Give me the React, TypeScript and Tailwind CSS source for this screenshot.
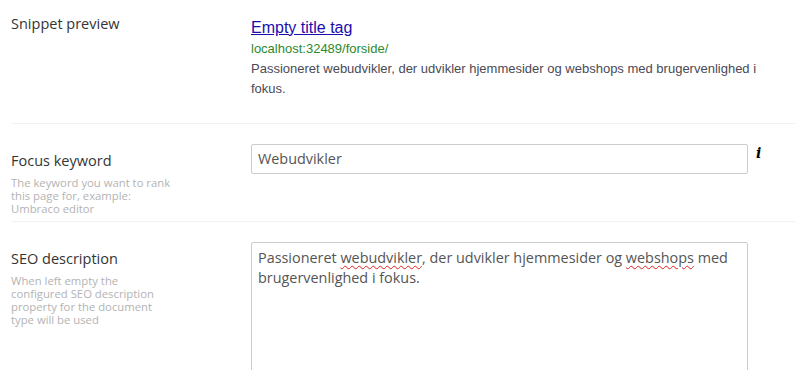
export default function App() {
  const label = "text-[14.5px] leading-[20px] text-[#343434]";
  const desc = "text-[11.3px] leading-[13px] text-[#b3b3b3]";
  const wavy = "underline decoration-wavy decoration-[#e02020] decoration-[1px] underline-offset-[2px]";
  return (
    <div className="w-[795px] h-[370px] overflow-hidden bg-white pl-[11px]" style={{ fontFamily: '"Open Sans", sans-serif' }}>
      {/* Snippet preview */}
      <div className="grid grid-cols-[240px_1fr] border-b border-[#f2f2f2] h-[124px] pt-[14px]">
        <div className={label}>Snippet preview</div>
        <div className="pt-[4px] pr-[10px]" style={{ fontFamily: '"Liberation Sans", Arial, sans-serif' }}>
          <div className="text-[16px] leading-[20px] text-[#1a0dab] underline">Empty title tag</div>
          <div className="text-[13px] leading-[20px] text-[#2c8a2c] mt-[1px]">localhost:32489/forside/</div>
          <div className="text-[13px] leading-[20px] text-[#4a4a55]">
            Passioneret webudvikler, der udvikler hjemmesider og webshops med brugervenlighed i fokus.
          </div>
        </div>
      </div>
      {/* Focus keyword */}
      <div className="grid grid-cols-[240px_1fr] border-b border-[#f2f2f2] h-[98px] pt-[20px]">
        <div className="pt-[7px]">
          <div className={label}>Focus keyword</div>
          <div className={`${desc} mt-[5px] w-[168px]`}>
            The keyword you want to rank this page for, example: Umbraco editor
          </div>
        </div>
        <div className="flex items-start">
          <div className="w-[497px] h-[30px] border border-[#cccccc] rounded-[2px] px-[6px] text-[14.4px] leading-[28px] text-[#555555]">
            Webudvikler
          </div>
          <div
            className="ml-[8px] -mt-[1px] text-[14px] leading-[20px] font-bold italic text-black"
            style={{ fontFamily: '"DejaVu Serif", "Liberation Serif", serif' }}
          >
            i
          </div>
        </div>
      </div>
      {/* SEO description */}
      <div className="grid grid-cols-[240px_1fr] pt-[20px]">
        <div className="pt-[7px]">
          <div className={label}>SEO description</div>
          <div className={`${desc} mt-[5px] w-[150px]`}>
            When left empty the configured SEO description property for the document type will be used
          </div>
        </div>
        <div>
          <div className="w-[497px] h-[160px] border border-[#cccccc] rounded-[2px] px-[6px] py-[5px] text-[14.4px] leading-[20px] text-[#555555]">
            Passioneret <span className={wavy}>webudvikler</span>, der udvikler hjemmesider og{" "}
            <span className={wavy}>webshops</span> med brugervenlighed i fokus.
          </div>
        </div>
      </div>
    </div>
  );
}
